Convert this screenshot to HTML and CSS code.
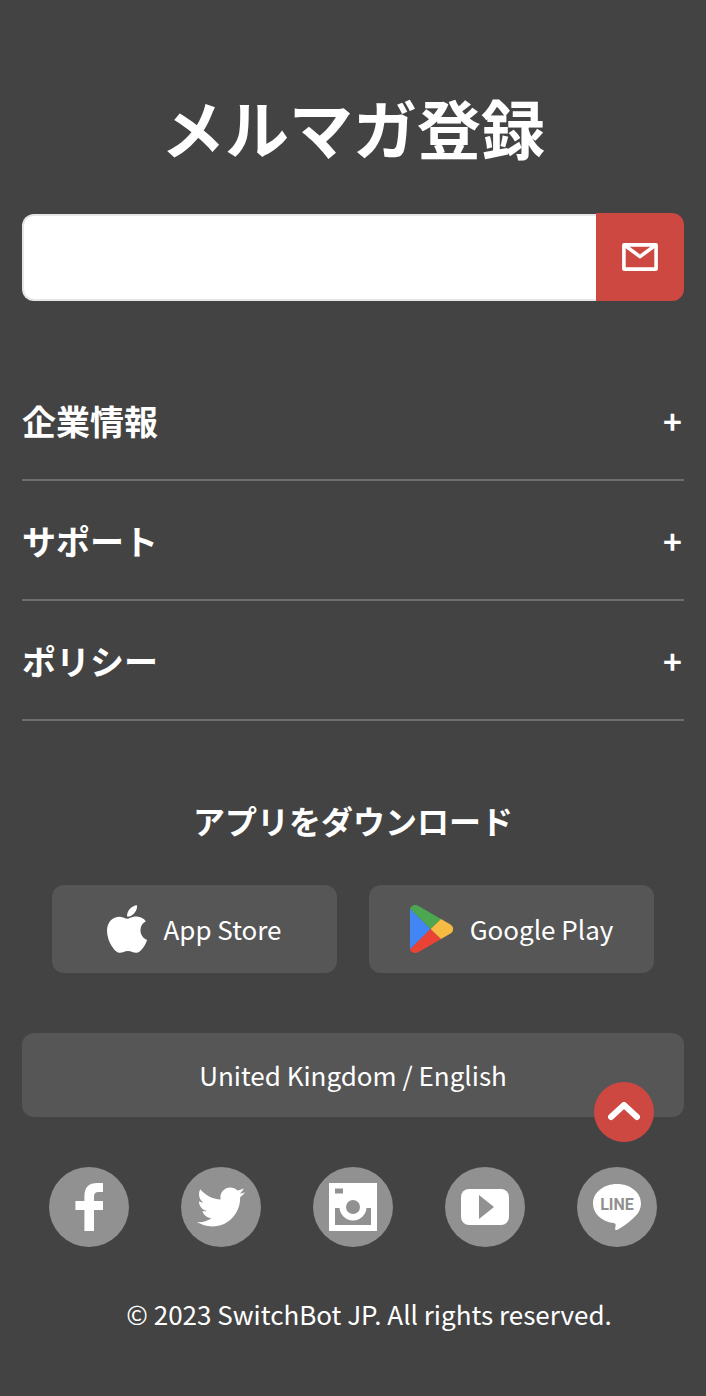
FILE: index.html
```html
<!DOCTYPE html>
<html lang="ja">
<head>
<meta charset="utf-8">
<meta name="viewport" content="width=device-width, initial-scale=1">
<title>SwitchBot JP</title>
<link rel="stylesheet" href="styles.css">
</head>
<body>
<footer class="footer">
  <h2 class="newsletter-title">メルマガ登録</h2>
  <form class="newsletter">
    <input class="newsletter-input" type="email" aria-label="メールアドレス">
    <button class="newsletter-submit" type="button" aria-label="登録">
      <svg width="36" height="28" viewBox="0 0 36 28" fill="none" stroke="#fff" stroke-width="3.6" stroke-linejoin="round"><rect x="1.9" y="1.9" width="32.2" height="24.2"/><path d="M3 2.5 18 13.6 33 2.5"/></svg>
    </button>
  </form>

  <nav class="menu">
    <button class="menu-item" type="button"><span>企業情報</span><span class="menu-plus">+</span></button>
    <button class="menu-item" type="button"><span>サポート</span><span class="menu-plus">+</span></button>
    <button class="menu-item" type="button"><span>ポリシー</span><span class="menu-plus">+</span></button>
  </nav>

  <h3 class="apps-title">アプリをダウンロード</h3>
  <div class="apps">
    <a class="app" href="#">
      <svg width="40" height="48" viewBox="4 32 376 448" fill="#fff"><path d="M318.7 268.7c-.2-36.7 16.4-64.4 50-84.8-18.8-26.9-47.2-41.7-84.7-44.6-35.5-2.8-74.3 20.7-88.5 20.7-15 0-49.4-19.7-76.4-19.7C63.3 141.2 4 184.8 4 273.5q0 39.3 14.4 81.2c12.8 36.7 59 126.7 107.2 125.2 25.2-.6 43-17.9 75.8-17.9 31.8 0 48.3 17.9 76.4 17.9 48.6-.7 90.4-82.5 102.6-119.3-65.2-30.7-61.7-90-61.7-91.9zm-56.6-164.2c27.3-32.4 24.8-61.9 24-72.5-24.1 1.4-52 16.4-67.9 34.9-17.5 19.8-27.8 44.3-25.6 71.9 26.1 2 49.9-11.4 69.5-34.3z"/></svg>
      <span class="app-name">App Store</span>
    </a>
    <a class="app" href="#">
      <svg width="44" height="48" viewBox="0 0 44 48"><path fill="#4285f4" d="M0 3.6 20.6 24 0 44.4z"/><path fill="#4ca750" d="M0 3.8Q1.5 0 5 0 7 0 9 1.2L31 14 20.6 24z"/><path fill="#ea4335" d="M0 44.2Q1.5 48 5 48 7 48 9 46.8L31 34 20.6 24z"/><path fill="#f6bb42" d="M31 14 40.5 19.4Q43.2 21 43.2 24T40.5 28.6L31 34 20.6 24z"/></svg>
      <span class="app-name">Google Play</span>
    </a>
  </div>

  <button class="region" type="button">United Kingdom / English</button>

  <div class="social">
    <a class="social-link" href="#" aria-label="Facebook"><svg width="28" height="48" viewBox="0 0 28 48" fill="#fff"><path d="M28 0v9h-4.6q-4.4 0-4.4 4.600V18h9v9h-9v21H9.400V27H.4v-9h9v-5Q9.400 0 22.400 0z"/></svg></a>
    <a class="social-link" href="#" aria-label="Twitter"><svg width="48" height="48" viewBox="0 0 512 512" fill="#fff"><path d="M459.37 151.716c.325 4.548.325 9.097.325 13.645 0 138.72-105.583 298.558-298.558 298.558-59.452 0-114.68-17.219-161.137-47.106 8.447.974 16.568 1.299 25.34 1.299 49.055 0 94.213-16.568 130.274-44.832-46.132-.975-84.792-31.188-98.112-72.772 6.498.974 12.995 1.624 19.818 1.624 9.421 0 18.843-1.3 27.614-3.573-48.081-9.747-84.143-51.98-84.143-102.985v-1.299c13.969 7.797 30.214 12.67 47.431 13.319-28.264-18.843-46.781-51.005-46.781-87.391 0-19.492 5.197-37.36 14.294-52.954 51.655 63.675 129.3 105.258 216.365 109.807-1.624-7.797-2.599-15.918-2.599-24.04 0-57.828 46.782-104.934 104.934-104.934 30.213 0 57.502 12.67 76.67 33.137 23.715-4.548 46.456-13.32 66.599-25.34-7.798 24.366-24.366 44.833-46.132 57.827 21.117-2.273 41.584-8.122 60.426-16.243-14.292 20.791-32.161 39.308-52.628 54.253z"/></svg></a>
    <a class="social-link" href="#" aria-label="Instagram"><svg width="48" height="48" viewBox="0 0 48 48"><path fill="#fff" d="M0 0h48v48H0z"/><g fill="#919191"><path d="M6 5.500h8v5H6zM6 25h36v17H6z"/></g><circle cx="24" cy="24" r="13.5" fill="#fff"/><circle cx="24" cy="24" r="7" fill="#919191"/></svg></a>
    <a class="social-link" href="#" aria-label="YouTube"><svg width="48" height="36" viewBox="0 0 48 36"><rect width="48" height="36" rx="8" fill="#fff"/><path fill="#919191" d="M18 6v24l15-12z"/></svg></a>
    <a class="social-link" href="#" aria-label="LINE"><svg width="48" height="46" viewBox="0 0 48 46"><path fill="#fff" d="M24 0C37.5 0 48 8.600 48 19.400c0 5-2.100 9.300-6.100 13.100C37 37.600 30 43 24 46c-1.600.6-2.100-.2-1.800-1.700l.4-2.700c.2-1.500-.3-2.400-2.200-2.700C8.500 37.500 0 29.400 0 19.400 0 8.600 10.500 0 24 0z"/><text class="line-label" x="24" y="26" text-anchor="middle">LINE</text></svg></a>
  </div>

  <p class="copyright">© 2023 SwitchBot JP. All rights reserved.</p>
</footer>

<button class="to-top" type="button" aria-label="トップへ戻る">
  <svg width="32" height="20" viewBox="0 0 32 20" fill="none" stroke="#fff" stroke-width="6" stroke-linecap="round" stroke-linejoin="round"><path d="M3 15 16 3 29 15"/></svg>
</button>
</body>
</html>
```

FILE: styles.css
```css
* {
  box-sizing: border-box;
}

body {
  margin: 0;
  background: #434343;
  color: #fff;
  font-family: "Noto Sans CJK JP", sans-serif;
}

svg {
  display: block;
  flex: none;
}

button {
  margin: 0;
  padding: 0;
  border: 0;
  color: inherit;
  font: inherit;
  cursor: pointer;
}

.footer {
  padding: 78px 22px 40px;
}

.newsletter-title {
  margin: 0 0 39px;
  font-size: 64px;
  font-weight: 700;
  line-height: 96px;
  text-align: center;
}

.newsletter {
  display: flex;
  align-items: flex-end;
  margin-bottom: 60px;
}

.newsletter-input {
  flex: 1;
  min-width: 0;
  height: 87px;
  padding: 0 24px;
  border: 2px solid #e6e6e6;
  border-right: 0;
  border-radius: 12px 0 0 12px;
  background: #fff;
  color: #434343;
  font: inherit;
  font-size: 26px;
}

.newsletter-submit {
  display: flex;
  align-items: center;
  justify-content: center;
  width: 88px;
  height: 88px;
  border-radius: 0 12px 12px 0;
  background: #cd4841;
}

.menu-item {
  display: flex;
  align-items: center;
  justify-content: space-between;
  width: 100%;
  height: 120px;
  border-bottom: 2px solid #6d6d6d;
  background: none;
  font-size: 34px;
  font-weight: 700;
}

.menu-plus {
  padding-right: 2px;
  font-size: 32px;
}

.apps-title {
  margin: 75px 0 41px;
  font-size: 32px;
  font-weight: 700;
  line-height: 48px;
  text-align: center;
}

.apps {
  display: grid;
  grid-template-columns: 1fr 1fr;
  gap: 32px;
  padding: 0 30px;
}

.app {
  display: flex;
  align-items: center;
  justify-content: center;
  gap: 16px;
  height: 88px;
  border-radius: 12px;
  background: #565656;
  color: inherit;
  font-size: 26px;
  text-decoration: none;
  white-space: nowrap;
}

.app-name {
  padding-bottom: 2px;
}

.region {
  width: 100%;
  height: 84px;
  margin: 60px 0 50px;
  padding-bottom: 2px;
  border-radius: 12px;
  background: #565656;
  font-size: 26px;
}

.social {
  display: flex;
  justify-content: space-around;
  padding: 0 1px;
}

.social-link {
  display: flex;
  align-items: center;
  justify-content: center;
  width: 80px;
  height: 80px;
  border-radius: 50%;
  background: #919191;
}

.line-label {
  fill: #919191;
  font-family: Roboto, sans-serif;
  font-size: 16px;
  font-weight: 700;
}

.copyright {
  margin: 47px 0 0;
  padding-left: 32px;
  font-size: 26px;
  line-height: 40px;
  text-align: center;
}

.to-top {
  position: fixed;
  right: 52px;
  bottom: 254px;
  display: flex;
  align-items: center;
  justify-content: center;
  width: 60px;
  height: 60px;
  border-radius: 50%;
  background: #cd4841;
}
```
